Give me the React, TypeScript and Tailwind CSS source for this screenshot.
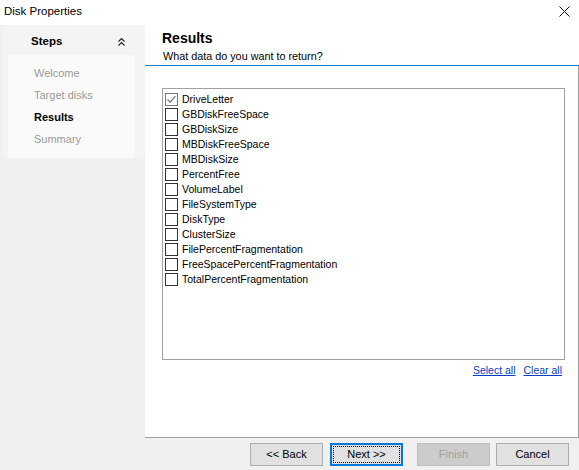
import React from "react";

const items = [
  "DriveLetter",
  "GBDiskFreeSpace",
  "GBDiskSize",
  "MBDiskFreeSpace",
  "MBDiskSize",
  "PercentFree",
  "VolumeLabel",
  "FileSystemType",
  "DiskType",
  "ClusterSize",
  "FilePercentFragmentation",
  "FreeSpacePercentFragmentation",
  "TotalPercentFragmentation",
];

function Check({ checked }: { checked: boolean }) {
  return (
    <div
      className={
        "w-[13px] h-[13px] bg-white flex items-center justify-center shrink-0 border " +
        (checked ? "border-[#7a7a7a]" : "border-[#333333]")
      }
    >
      {checked && (
        <svg width="11" height="11" viewBox="0 0 11 11">
          <path d="M1.5 5.5 L4.2 8.2 L9.5 2.2" fill="none" stroke="#6f6f6f" strokeWidth="1.2" />
        </svg>
      )}
    </div>
  );
}

function Btn({
  label,
  variant,
}: {
  label: string;
  variant?: "focus" | "disabled";
}) {
  if (variant === "focus") {
    return (
      <div className="w-[73px] h-[23px] border-2 border-[#0078d7] bg-[#e1e1e1] p-[1px]">
        <div className="w-full h-full border border-dotted border-black flex items-center justify-center text-[11px] text-black">
          {label}
        </div>
      </div>
    );
  }
  if (variant === "disabled") {
    return (
      <div className="w-[73px] h-[23px] border border-[#bfbfbf] bg-[#cccccc] flex items-center justify-center text-[11px] text-[#a0a0a0]">
        {label}
      </div>
    );
  }
  return (
    <div className="w-[73px] h-[23px] border border-[#adadad] bg-[#e1e1e1] flex items-center justify-center text-[11px] text-black">
      {label}
    </div>
  );
}

export default function App() {
  return (
    <div
      className="w-[579px] h-[470px] bg-[#f0f0f0] flex flex-col overflow-hidden text-black"
      style={{ fontFamily: '"Liberation Sans", Arial, sans-serif' }}
    >
      {/* title bar */}
      <div className="h-[25px] bg-white flex items-center justify-between pl-[4px] pr-[9px] shrink-0">
        <span className="text-[11.5px] -mt-[2px]">Disk Properties</span>
        <svg width="11" height="11" viewBox="0 0 11 11" className="-mt-[2px]">
          <path d="M0.5 0.5 L10.5 10.5 M10.5 0.5 L0.5 10.5" stroke="#111" strokeWidth="1" />
        </svg>
      </div>

      {/* body */}
      <div className="flex h-[413px] shrink-0">
        {/* sidebar */}
        <div className="w-[145px] shrink-0">
          <div className="ml-[3px] bg-[#f4f4f4] h-[133px] flex flex-col">
            <div className="h-[30px] flex items-center justify-between pl-[28px] pr-[20px] pt-[3px]">
              <span className="text-[11.5px] font-bold">Steps</span>
              <svg width="7" height="8" viewBox="0 0 7 8">
                <path d="M0.5 3.5 L3.5 0.5 L6.5 3.5 M0.5 7.5 L3.5 4.5 L6.5 7.5" fill="none" stroke="#222" strokeWidth="1.1" />
              </svg>
            </div>
            <div className="ml-[5px] w-[127px] flex-1 bg-[#fafafa] pt-[7px] pl-[26px] flex flex-col">
              <div className="h-[22px] flex items-center text-[11px] text-[#9a9a9a]">Welcome</div>
              <div className="h-[22px] flex items-center text-[11px] text-[#9a9a9a]">Target disks</div>
              <div className="h-[22px] flex items-center text-[11px] font-bold">Results</div>
              <div className="h-[22px] flex items-center text-[11px] text-[#9a9a9a]">Summary</div>
            </div>
          </div>
        </div>

        {/* right panel */}
        <div className="flex-1 flex flex-col bg-white">
          <div className="h-[40px] pl-[17px] pt-[5px] flex flex-col shrink-0">
            <div className="text-[14px] font-bold leading-[16px]">Results</div>
            <div className="text-[10.8px] leading-[14px] mt-[3px] pl-[1px]">What data do you want to return?</div>
          </div>
          <div className="h-[1px] bg-[#1f7acc] shrink-0" />
          <div className="flex-1 border-r border-b border-[#a0a0a0] flex flex-col pl-[17px] pr-[13px] pt-[22px]">
            <div className="h-[272px] border border-[#a0a0a0] bg-white pt-[3px] pl-[2px] flex flex-col">
              {items.map((it, i) => (
                <div key={it} className="h-[15px] flex items-center gap-[4px]">
                  <Check checked={i === 0} />
                  <span className="text-[10.5px] leading-[15px]">{it}</span>
                </div>
              ))}
            </div>
            <div className="flex justify-end gap-[8px] pr-[3px] mt-[3px] text-[10.5px] text-[#0b3cc1]">
              <span className="underline">Select all</span>
              <span className="underline">Clear all</span>
            </div>
          </div>
        </div>
      </div>

      {/* buttons */}
      <div className="flex-1 flex items-start justify-end pt-[5px] pr-[10px]">
        <Btn label="<< Back" />
        <div className="w-[7px]" />
        <Btn label="Next >>" variant="focus" />
        <div className="w-[14px]" />
        <Btn label="Finish" variant="disabled" />
        <div className="w-[6px]" />
        <Btn label="Cancel" />
      </div>
    </div>
  );
}
